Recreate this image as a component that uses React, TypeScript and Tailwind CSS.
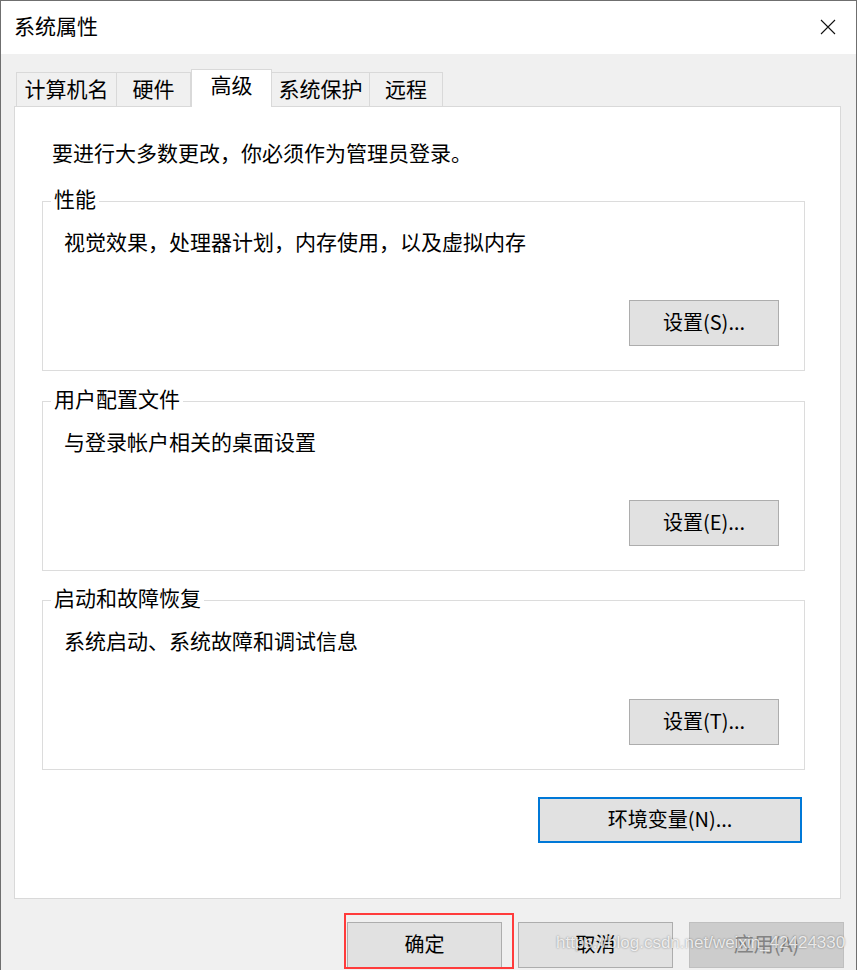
import React from 'react'

const font = { fontFamily: '"Noto Sans CJK SC", "Noto Sans", sans-serif' }

function Tab({ label, width, active }: { label: string; width: string; active?: boolean }) {
  if (active) {
    return (
      <div
        className={`${width} h-[38px] -mb-px relative z-10 bg-white border border-b-0 border-[#d9d9d9] flex items-start justify-center pt-0 text-[21px] leading-[28px]`}
      >
        {label}
      </div>
    )
  }
  return (
    <div
      className={`${width} h-[34px] bg-[#f0f0f0] border border-b-0 border-[#d9d9d9] -ml-px first:ml-0 flex items-center justify-center pb-[3px] text-[21px] leading-[28px]`}
    >
      {label}
    </div>
  )
}

function Button({ label, className = '' }: { label: string; className?: string }) {
  return (
    <div
      className={`h-[46px] bg-[#e1e1e1] border border-[#adadad] flex items-center justify-center pb-[3px] text-[20px] leading-[28px] text-black ${className}`}
    >
      {label}
    </div>
  )
}

function Group({ title, desc, button, top }: { title: string; desc: string; button: string; top: string }) {
  return (
    <fieldset className={`${top} border border-[#dcdcdc]`}>
      <legend className="ml-[8px] px-[3px] text-[21px] leading-[28px]">
        <span className="relative top-[-3px]">{title}</span>
      </legend>
      <div className="pl-[21px] pr-[25px] pt-[12px] pb-[24px]">
        <p className="text-[21px] leading-[28px]">{desc}</p>
        <div className="flex justify-end mt-[45px]">
          <Button label={button} className="w-[150px]" />
        </div>
      </div>
    </fieldset>
  )
}

export default function App() {
  return (
    <div
      className="w-[857px] h-[970px] relative overflow-hidden bg-[#f0f0f0] border-l border-r border-t border-[#6f6f6f] text-black"
      style={font}
    >
      {/* title bar */}
      <div className="h-[53px] bg-white flex items-center justify-between pl-[13px] pr-[20px] pb-[5px]">
        <span className="text-[21px] leading-[28px]">系统属性</span>
        <svg width="16" height="16" viewBox="0 0 16 16" className="mt-[4px]">
          <path d="M1 1 L15 15 M15 1 L1 15" stroke="#111" strokeWidth="1.1" fill="none" />
        </svg>
      </div>

      <div className="pl-[13px] pr-[15px] pt-[15px]">
        {/* tabs */}
        <div className="flex items-end pl-[2px]">
          <Tab label="计算机名" width="w-[101px]" />
          <Tab label="硬件" width="w-[75px]" />
          <Tab label="高级" width="w-[81px]" active />
          <Tab label="系统保护" width="w-[99px]" />
          <Tab label="远程" width="w-[74px]" />
        </div>

        {/* panel */}
        <div className="bg-white border border-[#d9d9d9] pl-[27px] pr-[35px] pt-[31px] pb-[55px]">
          <p className="ml-[10px] text-[21px] leading-[28px]">要进行大多数更改，你必须作为管理员登录。</p>

          <Group
            top="mt-[21px]"
            title="性能"
            desc="视觉效果，处理器计划，内存使用，以及虚拟内存"
            button="设置(S)..."
          />
          <Group top="mt-[16px]" title="用户配置文件" desc="与登录帐户相关的桌面设置" button="设置(E)..." />
          <Group top="mt-[15px]" title="启动和故障恢复" desc="系统启动、系统故障和调试信息" button="设置(T)..." />

          <div className="flex justify-end mt-[27px] pr-[3px]">
            <div className="w-[264px] h-[46px] bg-[#e1e1e1] border-2 border-[#0078d7] flex items-center justify-center pb-[3px] text-[20px] leading-[28px]">
              环境变量(N)...
            </div>
          </div>
        </div>

        {/* dialog buttons */}
        <div className="flex justify-end gap-[16px] mt-[23px] mr-[-3px]">
          <Button label="确定" className="w-[155px]" />
          <Button label="取消" className="w-[155px]" />
          <div className="w-[155px] h-[46px] bg-[#cccccc] border border-[#bfbfbf] flex items-center justify-center pb-[3px] text-[20px] leading-[28px] text-[#838383]">
            应用(A)
          </div>
        </div>
      </div>

      {/* red highlight */}
      <div className="absolute left-[343px] top-[912px] w-[170px] h-[56px] border-2 border-[#ff3b3b] pointer-events-none" />

      {/* watermark */}
      <span
        className="absolute left-[555px] top-[930px] text-[17px] leading-[24px] text-white/80 whitespace-nowrap"
        style={{ fontFamily: '"Liberation Sans", Arial, sans-serif', textShadow: '0 0 2px rgba(0,0,0,0.45)' }}
      >
        https://blog.csdn.net/weixin_42424330
      </span>
    </div>
  )
}
